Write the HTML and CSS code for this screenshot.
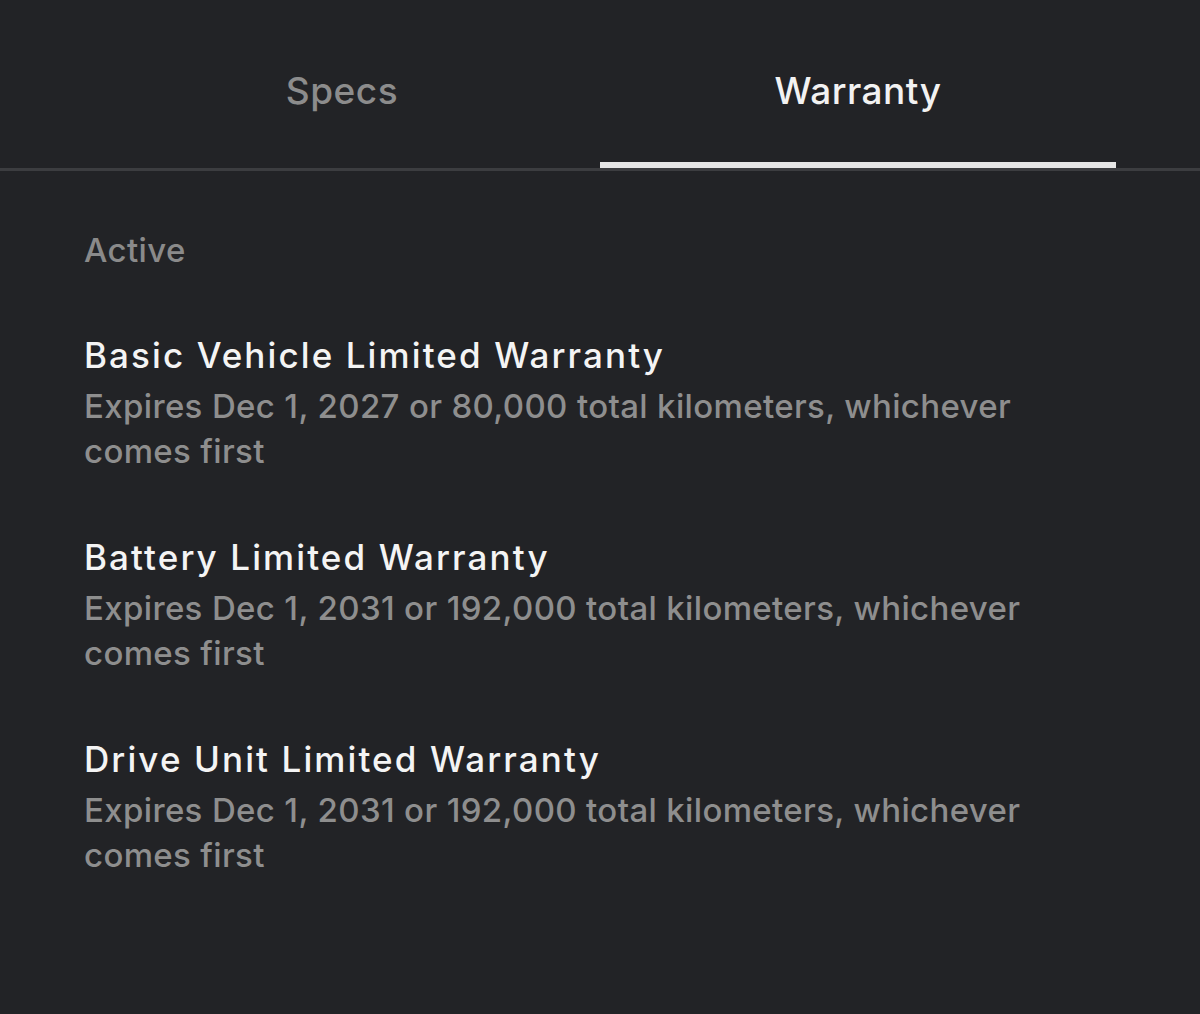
FILE: index.html
```html
<!DOCTYPE html>
<html lang="en">
<head>
<meta charset="utf-8">
<title>Warranty</title>
<link rel="stylesheet" href="styles.css">
</head>
<body>
<div class="screen">
  <nav class="tabbar">
    <div class="tabs">
      <div class="tab">Specs</div>
      <div class="tab tab-active">Warranty</div>
    </div>
  </nav>
  <main class="content">
    <div class="section-label">Active</div>
    <ul class="warranty-list">
      <li class="warranty">
        <div class="warranty-title">Basic Vehicle Limited Warranty</div>
        <div class="warranty-desc">Expires Dec 1, 2027 or 80,000 total kilometers, whichever comes first</div>
      </li>
      <li class="warranty">
        <div class="warranty-title">Battery Limited Warranty</div>
        <div class="warranty-desc">Expires Dec 1, 2031 or 192,000 total kilometers, whichever comes first</div>
      </li>
      <li class="warranty">
        <div class="warranty-title">Drive Unit Limited Warranty</div>
        <div class="warranty-desc">Expires Dec 1, 2031 or 192,000 total kilometers, whichever comes first</div>
      </li>
    </ul>
  </main>
</div>
</body>
</html>
```
FILE: styles.css
```css
html, body {
  margin: 0;
  padding: 0;
  background: #222326;
}
body {
  font-family: Inter, "Noto Sans", "Liberation Sans", sans-serif;
  color: #f0f0f0;
  -webkit-font-smoothing: antialiased;
}
.screen {
  width: 1200px;
  height: 1014px;
  background: #222326;
  overflow: hidden;
}
.tabbar {
  border-bottom: 3px solid #3c3d40;
}
.tabs {
  display: flex;
  margin: 0 84px;
}
.tab {
  flex: 1;
  text-align: center;
  font-size: 37px;
  font-weight: 500;
  line-height: 50px;
  padding: 66px 0 46px;
  color: #8c8c8c;
  border-bottom: 6px solid transparent;
  letter-spacing: 0.5px;
}
.tab-active {
  color: #f2f2f2;
  border-bottom-color: #e6e6e6;
}
.content {
  padding: 59px 84px 0;
}
.section-label {
  font-size: 33px;
  font-weight: 500;
  line-height: 40px;
  color: #8a8a8a;
  margin-bottom: 63px;
  letter-spacing: 0.4px;
}
.warranty-list {
  list-style: none;
  margin: 0;
  padding: 0;
  display: flex;
  flex-direction: column;
  gap: 61px;
}
.warranty-title {
  font-size: 35px;
  font-weight: 500;
  line-height: 44px;
  color: #f4f4f4;
  margin-bottom: 7px;
  letter-spacing: 2.1px;
}
.warranty-desc {
  max-width: 970px;
  font-size: 33px;
  font-weight: 500;
  line-height: 45px;
  color: #8e8e8e;
  letter-spacing: 0.35px;
}
```
